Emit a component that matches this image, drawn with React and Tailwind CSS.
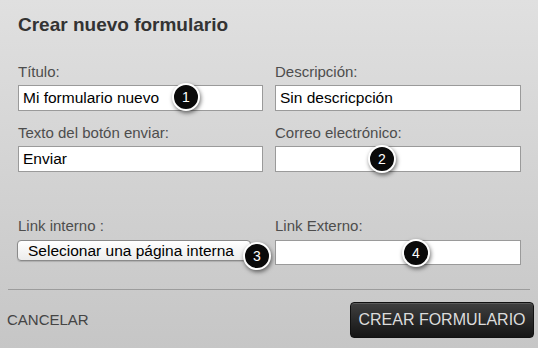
import React from "react";

function Badge({ n, x, y }) {
  return (
    <div
      className="absolute flex h-[28px] w-[28px] items-center justify-center rounded-full border-2 border-white bg-[#0a0a0a] text-[14px] leading-none text-white shadow-[1px_2px_4px_rgba(0,0,0,0.55)]"
      style={{ left: x - 14, top: y - 14 }}
    >
      {n}
    </div>
  );
}

function Field({ label, value, mtClass }) {
  return (
    <div className={mtClass}>
      <div className="mb-[4px] text-[15px] leading-[18px] text-[#4d4d4d]">{label}</div>
      <div className="h-[26px] border border-[#9a9a9a] bg-white pl-[4px] text-[15.5px] leading-[24px] text-black">
        {value}
      </div>
    </div>
  );
}

export default function App() {
  return (
    <div
      className="relative flex h-[348px] w-[538px] flex-col overflow-hidden bg-gradient-to-b from-[#e0e0e0] to-[#c6c6c6]"
      style={{ fontFamily: '"Liberation Sans", Arial, sans-serif' }}
    >
      <div className="pl-[18px] pt-[13px] text-[19px] font-bold leading-[23px] text-[#333]">
        Crear nuevo formulario
      </div>

      <div className="grid grid-cols-[245px_246px] gap-x-[12px] pl-[18px] pr-[17px]">
        <Field label="Título:" value="Mi formulario nuevo" mtClass="mt-[27px]" />
        <Field label="Descripción:" value="Sin descricpción" mtClass="mt-[27px]" />
        <Field label="Texto del botón enviar:" value="Enviar" mtClass="mt-[13px]" />
        <Field label="Correo electrónico:" value="" mtClass="mt-[13px]" />

        <div className="mt-[45px]">
          <div className="mb-[5px] text-[15px] leading-[18px] text-[#4d4d4d]">Link interno :</div>
          <div className="ml-[-1px] mt-[1px] h-[21px] w-[234px] rounded-[4px] border border-[#8a8a8a] bg-gradient-to-b from-white to-[#ececec] pl-[10px] text-[15.5px] leading-[19px] text-black shadow-[0_1px_1px_rgba(0,0,0,0.15)]">
            Selecionar una página interna
          </div>
        </div>
        <div className="mt-[45px]">
          <div className="mb-[5px] text-[15px] leading-[18px] text-[#4d4d4d]">Link Externo:</div>
          <div className="h-[25px] border border-[#9a9a9a] bg-white"></div>
        </div>
      </div>

      <div className="mx-[8px] mt-[24px] h-[1px] bg-[#9c9c9c]"></div>

      <div className="mt-[12px] flex items-center justify-between pl-[7px] pr-[4px]">
        <div className="text-[15px] leading-[18px] text-[#444]">CANCELAR</div>
        <div className="flex h-[36px] w-[184px] items-center justify-center rounded-[4px] border border-[#111] bg-gradient-to-b from-[#404040] to-[#151515] text-[16px] text-[#dcdcdc] shadow-[inset_0_1px_0_rgba(255,255,255,0.15)]">
          CREAR FORMULARIO
        </div>
      </div>

      <Badge n="1" x={186} y={97} />
      <Badge n="2" x={382} y={159} />
      <Badge n="3" x={257} y={256} />
      <Badge n="4" x={416} y={253} />
    </div>
  );
}
